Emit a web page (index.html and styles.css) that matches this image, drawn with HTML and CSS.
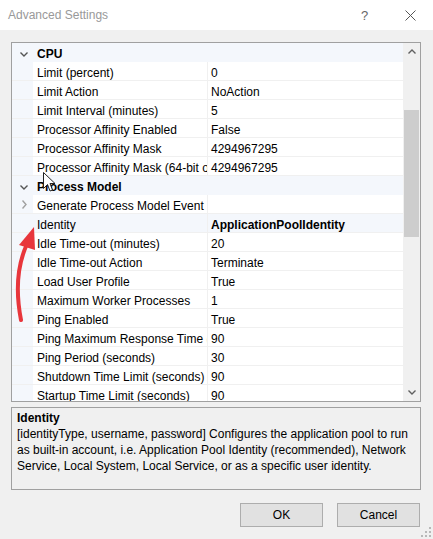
FILE: index.html
```html
<!DOCTYPE html>
<html lang="en">
<head>
  <meta charset="UTF-8">
  <meta name="viewport" content="width=device-width, initial-scale=1.0">
  <title>Advanced Settings</title>
  <link rel="stylesheet" href="styles.css">
</head>
<body>
  <div class="dialog">
    <div class="titlebar">
      <span class="title">Advanced Settings</span>
      <span class="tb-btn help">?</span>
      <span class="tb-btn close">
        <svg width="11" height="11" viewBox="0 0 11 11"><path d="M0.5 0.5 L10.5 10.5 M10.5 0.5 L0.5 10.5" stroke="#555" stroke-width="1"/></svg>
      </span>
    </div>

    <div class="content">
      <div class="grid">
        <div class="rows">
          <div class="cat">
            <span class="gutter"><svg width="8" height="5" viewBox="0 0 8 5"><path d="M0.5 0.5 L4 4 L7.5 0.5" fill="none" stroke="#555" stroke-width="1.4"/></svg></span>
            <span class="cat-name">CPU</span>
          </div>
          <div class="prop"><span class="gutter"></span><span class="name">Limit (percent)</span><span class="value">0</span></div>
          <div class="prop"><span class="gutter"></span><span class="name">Limit Action</span><span class="value">NoAction</span></div>
          <div class="prop"><span class="gutter"></span><span class="name">Limit Interval (minutes)</span><span class="value">5</span></div>
          <div class="prop"><span class="gutter"></span><span class="name">Processor Affinity Enabled</span><span class="value">False</span></div>
          <div class="prop"><span class="gutter"></span><span class="name">Processor Affinity Mask</span><span class="value">4294967295</span></div>
          <div class="prop"><span class="gutter"></span><span class="name">Processor Affinity Mask (64-bit option)</span><span class="value">4294967295</span></div>
          <div class="cat">
            <span class="gutter"><svg width="8" height="5" viewBox="0 0 8 5"><path d="M0.5 0.5 L4 4 L7.5 0.5" fill="none" stroke="#555" stroke-width="1.4"/></svg></span>
            <span class="cat-name">Process Model</span>
          </div>
          <div class="prop">
            <span class="gutter"><svg width="5" height="9" viewBox="0 0 5 9"><path d="M0.5 0.5 L4 4.5 L0.5 8.5" fill="none" stroke="#a0a0a0" stroke-width="1.4"/></svg></span>
            <span class="name">Generate Process Model Event Log Entry</span><span class="value"></span>
          </div>
          <div class="prop selected"><span class="gutter"></span><span class="name">Identity</span><span class="value bold">ApplicationPoolIdentity</span></div>
          <div class="prop"><span class="gutter"></span><span class="name">Idle Time-out (minutes)</span><span class="value">20</span></div>
          <div class="prop"><span class="gutter"></span><span class="name">Idle Time-out Action</span><span class="value">Terminate</span></div>
          <div class="prop"><span class="gutter"></span><span class="name">Load User Profile</span><span class="value">True</span></div>
          <div class="prop"><span class="gutter"></span><span class="name">Maximum Worker Processes</span><span class="value">1</span></div>
          <div class="prop"><span class="gutter"></span><span class="name">Ping Enabled</span><span class="value">True</span></div>
          <div class="prop"><span class="gutter"></span><span class="name">Ping Maximum Response Time (seconds)</span><span class="value">90</span></div>
          <div class="prop"><span class="gutter"></span><span class="name">Ping Period (seconds)</span><span class="value">30</span></div>
          <div class="prop"><span class="gutter"></span><span class="name">Shutdown Time Limit (seconds)</span><span class="value">90</span></div>
          <div class="prop"><span class="gutter"></span><span class="name">Startup Time Limit (seconds)</span><span class="value">90</span></div>
        </div>
        <div class="scrollbar">
          <span class="sb-arrow">
            <svg width="8" height="5" viewBox="0 0 8 5"><path d="M0.5 4.5 L4 1 L7.5 4.5" fill="none" stroke="#606060" stroke-width="1.4"/></svg>
          </span>
          <div class="sb-track"><div class="sb-thumb"></div></div>
          <span class="sb-arrow">
            <svg width="8" height="5" viewBox="0 0 8 5"><path d="M0.5 0.5 L4 4 L7.5 0.5" fill="none" stroke="#606060" stroke-width="1.4"/></svg>
          </span>
        </div>
      </div>

      <div class="desc">
        <div class="desc-title">Identity</div>
        <div class="desc-text">[identityType, username, password] Configures the application pool to run<br>as built-in account, i.e. Application Pool Identity (recommended), Network<br>Service, Local System, Local Service, or as a specific user identity.</div>
      </div>

      <div class="buttons">
        <button class="btn">OK</button>
        <button class="btn">Cancel</button>
      </div>
    </div>

    <!-- red annotation arrow drawn over the grid -->
    <svg class="annot" width="40" height="110" viewBox="0 0 40 110">
      <path d="M20 98 C15 72, 15 46, 26 22" fill="none" stroke="#e8363c" stroke-width="4" stroke-linecap="round"/>
      <path d="M33 5 L18 23 L34 28 Z" fill="#e8363c"/>
    </svg>

    <!-- mouse pointer -->
    <svg class="pointer" width="13" height="21" viewBox="0 0 13 21">
      <path d="M0.5 0.5 L0.5 16.5 L4.5 12.5 L7 19 L9.5 18 L7 11.5 L12 11.5 Z" fill="#fff" stroke="#222" stroke-width="1"/>
    </svg>

    <svg class="grip" width="10" height="10" viewBox="0 0 10 10">
      <rect x="8" y="0" width="2" height="2" fill="#b8b8b8"/>
      <rect x="4" y="4" width="2" height="2" fill="#b8b8b8"/>
      <rect x="8" y="4" width="2" height="2" fill="#b8b8b8"/>
      <rect x="0" y="8" width="2" height="2" fill="#b8b8b8"/>
      <rect x="4" y="8" width="2" height="2" fill="#b8b8b8"/>
      <rect x="8" y="8" width="2" height="2" fill="#b8b8b8"/>
    </svg>
  </div>
</body>
</html>
```

FILE: styles.css
```css
* {
  box-sizing: border-box;
}

body {
  margin: 0;
  font-family: "Liberation Sans", Arial, sans-serif;
  font-size: 12px;
  color: #000;
}

.dialog {
  position: relative;
  width: 433px;
  height: 539px;
  background: #f0f0f0;
  overflow: hidden;
}

.titlebar {
  display: flex;
  align-items: center;
  height: 30px;
  padding-left: 8px;
  background: #fff;
}

.titlebar .title {
  flex: 1;
  color: #999;
}

.tb-btn {
  display: flex;
  align-items: center;
  justify-content: center;
  width: 45px;
  height: 30px;
  color: #666;
}

.tb-btn.help {
  font-size: 13px;
  margin-right: 1px;
}

.content {
  padding: 12px 12px 0 11px;
}

.grid {
  display: flex;
  height: 360px;
  border: 1px solid #a0a0a0;
  background: #fff;
}

.rows {
  flex: 1;
  overflow: hidden;
}

/* 18px rows + 1px line; text sits a touch low like the native grid */
.cat,
.prop {
  display: grid;
  grid-template-columns: 21px 175px 1fr;
  height: 19px;
  line-height: 22px;
  border-bottom: 1px solid #f0f0f0;
  white-space: nowrap;
}

.cat {
  grid-template-columns: 21px 1fr;
  background: #f4f7fc;
  border-bottom-color: #f4f7fc;
}

.gutter {
  display: flex;
  align-items: center;
  justify-content: center;
  background: #f4f7fc;
  padding-left: 3px;
}

.cat-name {
  padding-left: 4px;
  font-weight: bold;
}

.prop .name {
  padding-left: 4px;
  overflow: hidden;
  border-right: 1px solid #f0f0f0;
}

.prop .value {
  padding-left: 3px;
  overflow: hidden;
}

.prop.selected .name,
.prop.selected .value {
  background: #f4f7fc;
}

.bold {
  font-weight: bold;
}

.scrollbar {
  display: flex;
  flex-direction: column;
  width: 17px;
  background: #f0f0f0;
}

.sb-arrow {
  display: flex;
  align-items: center;
  justify-content: center;
  height: 17px;
}

.sb-track {
  flex: 1;
  padding: 50px 1px 0;
}

.sb-thumb {
  height: 127px;
  background: #cdcdcd;
}

.desc {
  height: 83px;
  margin-top: 5px;
  padding: 2px 5px;
  border: 1px solid #a0a0a0;
  line-height: 16px;
  white-space: nowrap;
}

.desc-title {
  font-weight: bold;
}

.buttons {
  display: flex;
  justify-content: flex-end;
  gap: 14px;
  margin-top: 13px;
  padding-right: 1px;
}

.btn {
  width: 83px;
  height: 24px;
  border: 1px solid #adadad;
  background: #e1e1e1;
  font: inherit;
  color: #000;
}

.annot {
  position: absolute;
  left: 1px;
  top: 222px;
}

.pointer {
  position: absolute;
  left: 43px;
  top: 172px;
}

.grip {
  position: absolute;
  right: 2px;
  bottom: 2px;
}
```
